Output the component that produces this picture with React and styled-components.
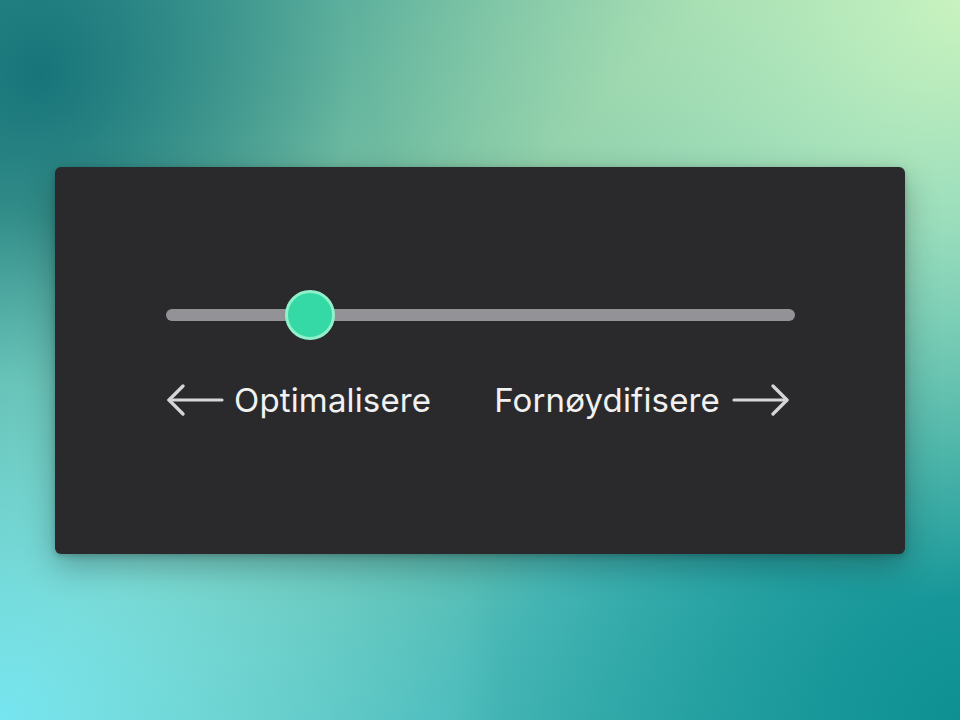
import React from "react";
import styled, { createGlobalStyle } from "styled-components";

const GlobalStyle = createGlobalStyle`
  html, body {
    margin: 0;
    padding: 0;
    width: 100%;
    height: 100%;
  }
  body {
    font-family: Inter, "Noto Sans", "DejaVu Sans", sans-serif;
  }
`;

const Page = styled.div`
  width: 960px;
  height: 720px;
  display: flex;
  align-items: center;
  justify-content: center;
  overflow: hidden;
  background:
    radial-gradient(circle at 100% 0%, #c9f3bf 0%, rgba(201, 243, 191, 0) 50%),
    radial-gradient(circle at 0% 100%, #76e5f0 0%, rgba(118, 229, 240, 0) 42%),
    radial-gradient(circle at 100% 100%, #0e9093 0%, rgba(14, 144, 147, 0) 42%),
    radial-gradient(circle at 4% 10%, #177479 0%, rgba(23, 116, 121, 0) 28%),
    linear-gradient(135deg, #3e9c96 0%, #7ec5a4 42%, #4cbab8 68%, #2aa6a8 100%);
`;

const Card = styled.div`
  width: 850px;
  height: 387px;
  box-sizing: border-box;
  padding: 123px 110px 0 111px;
  background: #2a2a2c;
  border-radius: 6px;
  box-shadow: 0 12px 32px rgba(0, 0, 0, 0.28), 0 2px 6px rgba(0, 0, 0, 0.2);
  display: flex;
  flex-direction: column;
`;

const SliderArea = styled.div`
  position: relative;
  height: 50px;
  display: flex;
  align-items: center;
`;

const Track = styled.div`
  width: 100%;
  height: 12px;
  border-radius: 6px;
  background: #939397;
`;

const Thumb = styled.div`
  position: absolute;
  top: 0;
  width: 50px;
  height: 50px;
  box-sizing: border-box;
  border-radius: 50%;
  background: #35d9a5;
  border: 3px solid #90f0ca;
  transform: translateX(-50%);
`;

const Labels = styled.div`
  margin-top: 40px;
  display: flex;
  justify-content: space-between;
  align-items: center;
  padding-right: 5px;
`;

const Label = styled.div`
  display: flex;
  align-items: center;
  gap: ${(p) => p.$gap}px;
  color: #f1f1f1;
  font-size: 33px;
  line-height: 40px;
  letter-spacing: 0.15px;
`;

const Arrow = ({ dir }) => (
  <svg width="58" height="32" viewBox="0 0 58 32" fill="none">
    <g
      stroke="#d6d6d8"
      strokeWidth="3.2"
      strokeLinecap="round"
      strokeLinejoin="round"
      transform={dir === "right" ? "translate(58 0) scale(-1 1)" : undefined}
    >
      <line x1="3" y1="16" x2="56" y2="16" />
      <polyline points="17,2 3,16 17,30" />
    </g>
  </svg>
);

export default function App() {
  const value = 0.229;
  return (
    <>
      <GlobalStyle />
      <Page>
        <Card>
          <SliderArea role="slider" aria-valuenow={Math.round(value * 100)}>
            <Track />
            <Thumb style={{ left: `${value * 100}%` }} />
          </SliderArea>
          <Labels>
            <Label $gap={10}>
              <Arrow dir="left" />
              Optimalisere
            </Label>
            <Label $gap={12}>
              Fornøydifisere
              <Arrow dir="right" />
            </Label>
          </Labels>
        </Card>
      </Page>
    </>
  );
}
